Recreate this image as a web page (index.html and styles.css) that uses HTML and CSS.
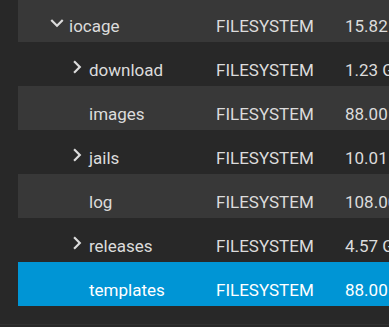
FILE: index.html
```html
<!DOCTYPE html>
<html lang="en">
<head>
  <meta charset="UTF-8">
  <meta name="viewport" content="width=device-width, initial-scale=1.0">
  <title>Datasets</title>
  <link rel="stylesheet" href="styles.css">
</head>
<body>
  <div class="page">
    <div class="tree-table">

      <div class="row light">
        <div class="cell name level-0">
          <svg class="toggle" viewBox="0 0 24 24"><path d="M7.41 8.59L12 13.17l4.59-4.58L18 10l-6 6-6-6 1.41-1.41z"/></svg>
          <span>iocage</span>
        </div>
        <div class="cell type">FILESYSTEM</div>
        <div class="cell size">15.82 GiB</div>
      </div>

      <div class="row dark">
        <div class="cell name level-1">
          <svg class="toggle" viewBox="0 0 24 24"><path d="M8.59 16.59L13.17 12 8.59 7.41 10 6l6 6-6 6-1.41-1.41z"/></svg>
          <span>download</span>
        </div>
        <div class="cell type">FILESYSTEM</div>
        <div class="cell size">1.23 GiB</div>
      </div>

      <div class="row light">
        <div class="cell name level-1">
          <span class="toggle"></span>
          <span>images</span>
        </div>
        <div class="cell type">FILESYSTEM</div>
        <div class="cell size">88.00 KiB</div>
      </div>

      <div class="row dark">
        <div class="cell name level-1">
          <svg class="toggle" viewBox="0 0 24 24"><path d="M8.59 16.59L13.17 12 8.59 7.41 10 6l6 6-6 6-1.41-1.41z"/></svg>
          <span>jails</span>
        </div>
        <div class="cell type">FILESYSTEM</div>
        <div class="cell size">10.01 GiB</div>
      </div>

      <div class="row light">
        <div class="cell name level-1">
          <span class="toggle"></span>
          <span>log</span>
        </div>
        <div class="cell type">FILESYSTEM</div>
        <div class="cell size">108.00 KiB</div>
      </div>

      <div class="row dark">
        <div class="cell name level-1">
          <svg class="toggle" viewBox="0 0 24 24"><path d="M8.59 16.59L13.17 12 8.59 7.41 10 6l6 6-6 6-1.41-1.41z"/></svg>
          <span>releases</span>
        </div>
        <div class="cell type">FILESYSTEM</div>
        <div class="cell size">4.57 GiB</div>
      </div>

      <div class="row selected">
        <div class="cell name level-1">
          <span class="toggle"></span>
          <span>templates</span>
        </div>
        <div class="cell type">FILESYSTEM</div>
        <div class="cell size">88.00 KiB</div>
      </div>

    </div>
  </div>
</body>
</html>
```

FILE: styles.css
```css
body {
  margin: 0;
  padding: 0;
  background-color: #282828;
  font-family: Roboto, "Noto Sans", sans-serif;
  font-size: 17px;
  color: #dcdcdc;
  overflow: hidden;
}

.page {
  height: 327px;
  padding-left: 18px;
  box-sizing: border-box;
  border-bottom: 1px solid #303030;
}

.tree-table {
  margin-top: -2px;
}

.row {
  display: grid;
  grid-template-columns: 198px 129px 1fr;
  height: 44px;
  white-space: nowrap;
}

.row.light {
  background-color: #383838;
}

.row.dark {
  background-color: #282828;
}

.row.selected {
  background-color: #0095d5;
  color: #ffffff;
}

.cell {
  line-height: 21px;
  padding-top: 18px;
  overflow: hidden;
}

.cell.name {
  display: flex;
  align-items: flex-start;
  padding-top: 0;
}

.cell.name span:last-child {
  padding-top: 18px;
}

.level-0 {
  padding-left: 26px;
}

.level-1 {
  padding-left: 46px;
}

/* expand / collapse chevron, slightly larger than the 24px default */
.toggle {
  display: block;
  flex: none;
  width: 26px;
  height: 26px;
  margin-top: 12px;
  margin-right: -1px;
  fill: #dcdcdc;
}
```
